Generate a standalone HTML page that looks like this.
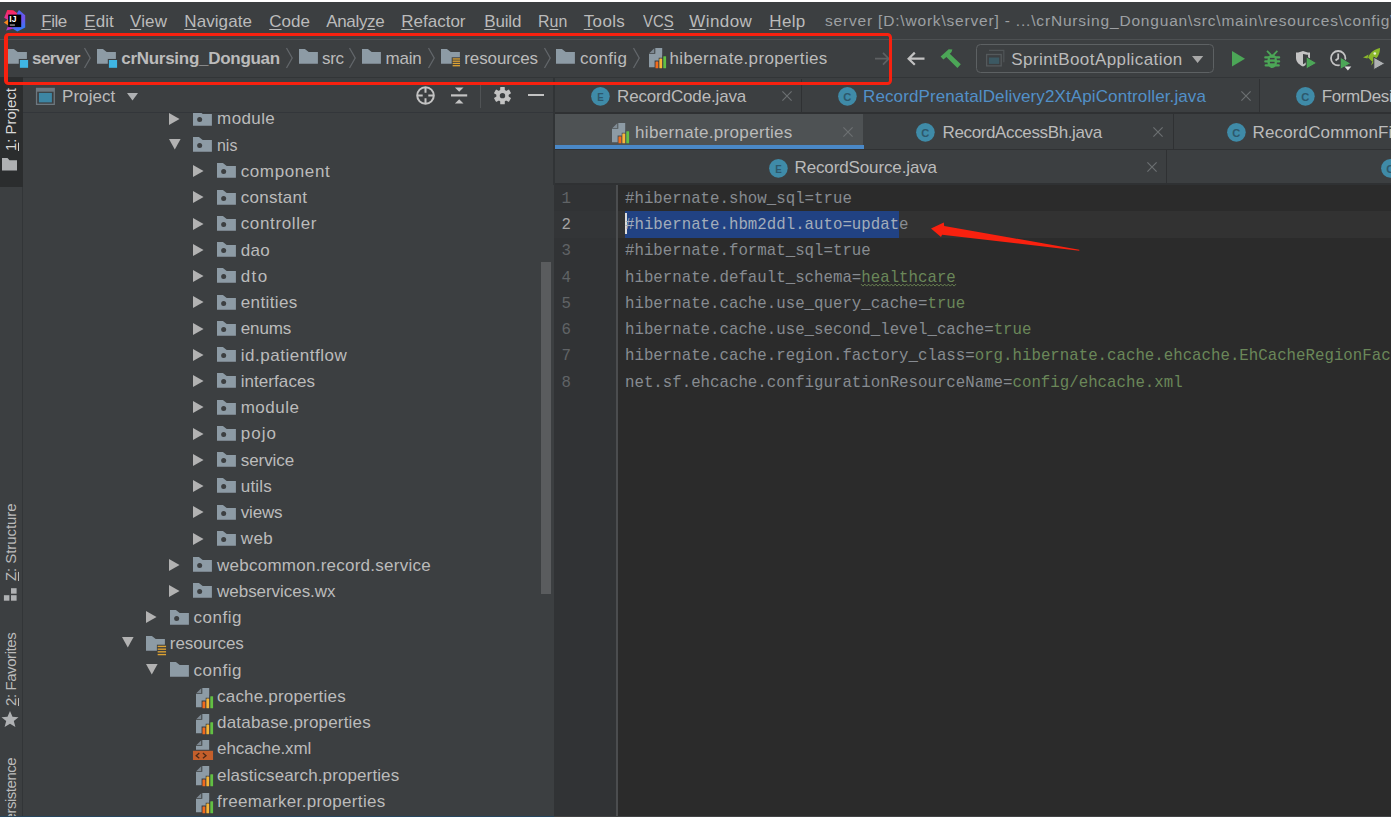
<!DOCTYPE html><html><head><meta charset="utf-8"><title>server - hibernate.properties</title><style>
html,body{margin:0;padding:0;}
body{width:1391px;height:817px;overflow:hidden;background:#3c3f41;position:relative;font-family:"Liberation Sans", sans-serif;color:#bbbbbb;}
.a{position:absolute;white-space:nowrap;}
.t{position:absolute;white-space:nowrap;font-size:17px;line-height:20px;color:#bbbbbb;}
.v{position:absolute;white-space:nowrap;font-size:15px;line-height:20px;color:#bbbbbb;transform-origin:0 0;transform:rotate(-90deg);}
.m{position:absolute;white-space:pre;font-family:"Liberation Mono", monospace;font-size:15.75px;line-height:20px;color:#8a8a8a;}
.ln{position:absolute;font-family:"Liberation Mono", monospace;font-size:15.75px;line-height:20px;color:#606366;}
u{text-decoration-thickness:1.4px;text-underline-offset:1.8px;}
svg{position:absolute;overflow:visible;}
</style></head><body>
<div class="a" style="left:0;top:0;width:1391px;height:2px;background:#fff"></div>
<svg style="left:0;top:0" width="30" height="34" viewBox="0 0 30 34">
<defs><linearGradient id="lgb" x1="0.300" y1="0" x2="0.600" y2="1"><stop offset="0" stop-color="#3a6df5"/><stop offset="0.500" stop-color="#7651ea"/><stop offset="1" stop-color="#2b80fa"/></linearGradient>
<linearGradient id="lgp" x1="0" y1="0" x2="0" y2="1"><stop offset="0" stop-color="#fe2857"/><stop offset="1" stop-color="#d733a6"/></linearGradient></defs>
<path d="M7.300 10.100 L13.200 10.200 L17 13 L17 20 L8 20 L4.200 17.800 Z" fill="url(#lgp)"/>
<path d="M3.900 22.400 L8.300 19.300 L8.300 25.400 Z" fill="#f7871e"/>
<path d="M6.200 30.400 L8.500 25 L13.500 28.400 Z" fill="#b537c8"/>
<path d="M19 10 L25.200 15.300 L25.200 27.600 L17.300 31.500 L11 27.500 L20 26 L17 13 Z" fill="url(#lgb)"/>
<rect x="8.200" y="14.600" width="13" height="12.500" fill="#000"/>
<rect x="9.800" y="24.400" width="5.100" height="1.300" fill="#a0a0a0"/>
<text x="9.300" y="21.600" font-family="Liberation Sans, sans-serif" font-weight="bold" font-size="8.600" fill="#fff">IJ</text>
</svg>
<div class="t" id="mn0" style="left:41.25px;top:12.01px;letter-spacing:-0.473px;"><u>F</u>ile</div>
<div class="t" id="mn1" style="left:84.25px;top:12.01px;letter-spacing:0.054px;"><u>E</u>dit</div>
<div class="t" id="mn2" style="left:130px;top:12.01px;letter-spacing:0.125px;"><u>V</u>iew</div>
<div class="t" id="mn3" style="left:184.25px;top:12.01px;letter-spacing:0.085px;"><u>N</u>avigate</div>
<div class="t" id="mn4" style="left:269.25px;top:12.01px;letter-spacing:0.027px;"><u>C</u>ode</div>
<div class="t" id="mn5" style="left:326.25px;top:12.01px;letter-spacing:-0.346px;">Analy<u>z</u>e</div>
<div class="t" id="mn6" style="left:401.25px;top:12.01px;letter-spacing:-0.002px;"><u>R</u>efactor</div>
<div class="t" id="mn7" style="left:484.25px;top:12.01px;letter-spacing:-0.181px;"><u>B</u>uild</div>
<div class="t" id="mn8" style="left:538px;top:12.01px;transform:scaleX(0.9369);transform-origin:0 50%;">R<u>u</u>n</div>
<div class="t" id="mn9" style="left:583.75px;top:12.01px;letter-spacing:0.347px;"><u>T</u>ools</div>
<div class="t" id="mn10" style="left:643px;top:12.01px;transform:scaleX(0.8794);transform-origin:0 50%;">VC<u>S</u></div>
<div class="t" id="mn11" style="left:689.25px;top:12.01px;letter-spacing:0.415px;"><u>W</u>indow</div>
<div class="t" id="mn12" style="left:769.25px;top:12.01px;letter-spacing:0.366px;"><u>H</u>elp</div>
<div class="t" id="title" style="left:825px;top:10.83px;font-size:15.5px;color:#9da0a3;letter-spacing:0.815px;">server [D:\work\server] - ...\crNursing_Donguan\src\main\resources\config\hibernate.properties</div>
<div class="a" style="left:0;top:38.700px;width:1391px;height:1px;background:#4d5052"></div>
<div class="a" style="left:0;top:77px;width:1391px;height:1px;background:#323537"></div>
<svg style="left:7.5px;top:49.1px" width="21" height="20" viewBox="0 0 21 20"><path d="M0 0 H5.900 L9.700 2.900 H18.900 V14.800 H0 Z" fill="#8d9ba5"/><rect x="10.800" y="9.950" width="10" height="10" fill="#3c3f41"/><rect x="11.900" y="11" width="8.200" height="7.800" fill="#3fb6e4"/></svg>
<div class="t" id="bc0" style="left:32px;top:48.51px;font-weight:bold;letter-spacing:-0.557px;">server</div>
<svg style="left:83.75px;top:48.200px" width="7" height="20" viewBox="0 0 7 20"><path d="M0.500 0 L6.200 10 L0.500 20" fill="none" stroke="#62666a" stroke-width="1.300"/></svg>
<svg style="left:97px;top:49.1px" width="21" height="20" viewBox="0 0 21 20"><path d="M0 0 H5.900 L9.700 2.900 H18.900 V14.800 H0 Z" fill="#8d9ba5"/><rect x="10.800" y="9.950" width="10" height="10" fill="#3c3f41"/><rect x="11.900" y="11" width="8.200" height="7.800" fill="#3fb6e4"/></svg>
<div class="t" id="bc1" style="left:121.25px;top:48.51px;font-weight:bold;letter-spacing:-0.282px;">crNursing_Donguan</div>
<svg style="left:286.25px;top:48.200px" width="7" height="20" viewBox="0 0 7 20"><path d="M0.500 0 L6.200 10 L0.500 20" fill="none" stroke="#62666a" stroke-width="1.300"/></svg>
<svg style="left:298.5px;top:49.1px" width="21" height="20" viewBox="0 0 21 20"><path d="M0 0 H5.900 L9.700 2.900 H18.900 V14.800 H0 Z" fill="#8d9ba5"/></svg>
<div class="t" id="bc2" style="left:322px;top:48.51px;letter-spacing:-0.369px;">src</div>
<svg style="left:349px;top:48.200px" width="7" height="20" viewBox="0 0 7 20"><path d="M0.500 0 L6.200 10 L0.500 20" fill="none" stroke="#62666a" stroke-width="1.300"/></svg>
<svg style="left:361.75px;top:49.1px" width="21" height="20" viewBox="0 0 21 20"><path d="M0 0 H5.900 L9.700 2.900 H18.900 V14.800 H0 Z" fill="#8d9ba5"/></svg>
<div class="t" id="bc3" style="left:385.5px;top:48.51px;letter-spacing:-0.174px;">main</div>
<svg style="left:427.75px;top:48.200px" width="7" height="20" viewBox="0 0 7 20"><path d="M0.500 0 L6.200 10 L0.500 20" fill="none" stroke="#62666a" stroke-width="1.300"/></svg>
<svg style="left:441px;top:49.2px" width="21" height="20" viewBox="0 0 21 20"><path d="M0 0 H5.900 L9.700 2.900 H18.900 V14.800 H0 Z" fill="#8d9ba5"/><rect x="10.700" y="8.300" width="10" height="11" fill="#3c3f41"/><rect x="11.650" y="9.3" width="7.350" height="1.300" fill="#dda233"/><rect x="11.650" y="11.55" width="7.350" height="1.300" fill="#dda233"/><rect x="11.650" y="13.8" width="7.350" height="1.300" fill="#dda233"/><rect x="11.650" y="16.05" width="7.350" height="1.300" fill="#dda233"/></svg>
<div class="t" id="bc4" style="left:464.25px;top:48.51px;letter-spacing:-0.105px;">resources</div>
<svg style="left:543.75px;top:48.200px" width="7" height="20" viewBox="0 0 7 20"><path d="M0.500 0 L6.200 10 L0.500 20" fill="none" stroke="#62666a" stroke-width="1.300"/></svg>
<svg style="left:556px;top:49.1px" width="21" height="20" viewBox="0 0 21 20"><path d="M0 0 H5.900 L9.700 2.900 H18.900 V14.800 H0 Z" fill="#8d9ba5"/></svg>
<div class="t" id="bc5" style="left:580px;top:48.51px;letter-spacing:0.295px;">config</div>
<svg style="left:632.75px;top:48.200px" width="7" height="20" viewBox="0 0 7 20"><path d="M0.500 0 L6.200 10 L0.500 20" fill="none" stroke="#62666a" stroke-width="1.300"/></svg>
<svg style="left:648.5px;top:48.2px" width="18" height="21" viewBox="0 0 18 21"><path d="M6.300 0 H13.200 V19.200 H0 V5.800 H6.300 Z" fill="#8d9ba5"/><path d="M5.300 0.300 L0.500 4.900 H5.300 Z" fill="#8d9ba5" opacity="0.800"/><path d="M5.600 20.500 V12.500 H9.700 V9.700 H13.500 V7.300 H17.500 V20.500 Z" fill="#3c3f41"/><rect x="6.500" y="13.400" width="2.800" height="6.900" rx="0.500" fill="#f26b1d"/><rect x="10.350" y="10.600" width="2.800" height="9.700" rx="0.500" fill="#f7b538"/><rect x="14.300" y="8.200" width="2.800" height="12.100" rx="0.500" fill="#62c043"/></svg>
<div class="t" id="bc6" style="left:669.5px;top:48.51px;letter-spacing:0.348px;">hibernate.properties</div>
<svg style="left:874.500px;top:52px" width="16" height="14" viewBox="0 0 16 14"><path d="M0 6.700 H13.500 M8 0.800 L13.800 6.700 L8 12.600" fill="none" stroke="#5e6163" stroke-width="1.700"/></svg>
<svg style="left:907px;top:52px" width="18" height="14" viewBox="0 0 18 14"><path d="M17.500 6.700 H1.800 M7.800 0.600 L1.600 6.700 L7.800 12.800" fill="none" stroke="#c2c2c2" stroke-width="2.200"/></svg>
<svg style="left:0;top:0" width="1391" height="80" viewBox="0 0 1391 80"><path d="M940.600 56.600 L948.700 49.300 L952.400 49.500 L951.400 52.300 L949.800 53.800 L960.800 64.300 L957.400 67.900 L946.400 57 L943.400 59.500 Z" fill="#4ca657"/></svg>
<div class="a" style="left:975.600px;top:44.200px;width:238px;height:28.800px;border:1.500px solid #5d6163;border-radius:4.500px;box-sizing:border-box;"></div>
<svg style="left:0;top:0" width="1391" height="80" viewBox="0 0 1391 80"><path d="M989 50.300 H1003.800 V62.300" fill="none" stroke="#505557" stroke-width="1.200"/><rect x="986.600" y="54.500" width="14.600" height="11.400" fill="#3c3f41" stroke="#555a5c" stroke-width="1.300"/><rect x="988.900" y="57.500" width="10.300" height="6.400" fill="#3c5963"/></svg>
<div class="t" id="runcfg" style="left:1011.25px;top:50.01px;letter-spacing:0.425px;">SprintBootApplication</div>
<svg style="left:1192px;top:55.500px" width="12" height="8" viewBox="0 0 12 8"><path d="M0 0 H11.250 L5.600 7 Z" fill="#a8a8a8"/></svg>
<svg style="left:1231.600px;top:50.900px" width="14" height="16" viewBox="0 0 14 16"><path d="M0 0 L13 7.750 L0 15.500 Z" fill="#4ca657"/></svg>
<svg style="left:1263.600px;top:49.800px" width="17" height="19" viewBox="0 0 17 19"><g fill="#4ca657">
<ellipse cx="8.200" cy="11.200" rx="4.900" ry="6.900"/>
<rect x="0.200" y="6.300" width="16" height="2.300" rx="1"/><rect x="0.200" y="10.300" width="16" height="2.300" rx="1"/><rect x="0.600" y="14.300" width="15.200" height="2.300" rx="1"/>
<path d="M3.600 0.300 L7.600 4.300 L6.200 5.500 L2.400 1.500 Z"/><path d="M12.800 0.300 L8.800 4.300 L10.200 5.500 L14 1.500 Z"/></g>
<rect x="5.900" y="7.900" width="4.700" height="1.500" fill="#3c3f41"/><rect x="5.900" y="11.800" width="4.700" height="1.500" fill="#3c3f41"/></svg>
<svg style="left:1295.700px;top:51.300px" width="21" height="18" viewBox="0 0 21 18">
<path d="M0 1.500 C3 1.500 5 0.800 7 0 C9 0.800 11 1.500 14 1.500 V7 C14 11.500 10 14 7 15.500 C4 14 0 11.500 0 7 Z" fill="#c4c4c4"/>
<path d="M7 3 C9 3.500 10.500 3.800 12 3.800 V7 C12 10 9.500 12 7 13.200 Z" fill="#3c3f41"/>
<path d="M10.200 5.700 L20.800 12 L10.200 18 Z" fill="#4ca657" stroke="#3c3f41" stroke-width="1"/></svg>
<svg style="left:1330.400px;top:49.900px" width="22" height="21" viewBox="0 0 22 21">
<circle cx="8.200" cy="8.200" r="7.200" fill="none" stroke="#c4c4c4" stroke-width="1.800"/>
<path d="M8.200 3.500 V8.500 L5.500 10.500" fill="none" stroke="#c4c4c4" stroke-width="1.800"/>
<path d="M10.200 7.100 L20.800 13.400 L10.200 19.400 Z" fill="#4ca657" stroke="#3c3f41" stroke-width="1"/>
<path d="M14.500 16.500 H21.300 L17.900 20.600 Z" fill="#e0e0e0"/></svg>
<svg style="left:1363.400px;top:47.800px" width="22" height="22" viewBox="0 0 22 22">
<path d="M17 0 C12 1 7.500 4 5 9.500 L9 13.500 C14 11 17 6.500 17 0 Z" fill="#8ab82a"/>
<path d="M5.500 6.500 L0 9.500 L4.500 10.500 Z M9.500 13 L8 17.500 L12.500 12.500 Z" fill="#8ab82a"/>
<circle cx="11.800" cy="5.500" r="1.300" fill="#e8f0d0"/>
<path d="M10.800 9.200 L21.800 15.500 L10.800 21.700 Z" fill="#afb1b3" stroke="#3c3f41" stroke-width="1"/></svg>
<div class="a" style="left:22px;top:78px;width:1px;height:739px;background:#323537"></div>
<div class="a" style="left:0;top:77.400px;width:22.500px;height:109.400px;background:#2b2d2e"></div>
<div class="v" id="v1" style="left:0.5px;top:151.1px;color:#d8d8d8;letter-spacing:-0.053px;"><u>1</u>: Project</div>
<svg style="left:2.200px;top:157.700px" width="15" height="13" viewBox="0 0 15 13"><path d="M0 0 H5.500 L7.500 2.200 H15 V12.500 H0 Z" fill="#afb1b3"/></svg>
<div class="v" id="v2" style="left:0.5px;top:580.6px;color:#bbbbbb;letter-spacing:-0.07px;"><u>Z</u>: Structure</div>
<svg style="left:0;top:580px" width="24" height="24" viewBox="0 580 24 24"><rect x="11" y="588.200" width="5.600" height="5.500" fill="#afb1b3"/><rect x="3.900" y="595.200" width="5.500" height="5.500" fill="#afb1b3"/><rect x="11" y="595.200" width="5.600" height="5.500" fill="#afb1b3"/></svg>
<div class="v" id="v3" style="left:0.5px;top:706px;color:#bbbbbb;letter-spacing:-0.417px;"><u>2</u>: Favorites</div>
<svg style="left:1.300px;top:710.700px" width="18" height="16" viewBox="0 0 17 16"><path d="M8.500 0 L11 5.800 L17 6.200 L12.300 10.100 L13.900 16 L8.500 12.700 L3.100 16 L4.700 10.100 L0 6.200 L6 5.800 Z" fill="#afb1b3"/></svg>
<div class="v" id="v4" style="left:0.5px;top:831px;color:#bbbbbb;letter-spacing:-0.476px;">Persistence</div>
<div class="a" style="left:23px;top:112px;width:530px;height:1px;background:#33363a"></div>
<svg style="left:0;top:0" width="60" height="110" viewBox="0 0 60 110"><rect x="35.900" y="87.800" width="19" height="17.200" fill="#6d7880"/><rect x="37.200" y="91.700" width="16.400" height="12" fill="#3c3f41"/><rect x="38.900" y="92.900" width="13" height="9.500" fill="#3d86a4"/></svg>
<div class="t" id="proj" style="left:62px;top:86.81px;letter-spacing:0.058px;">Project</div>
<svg style="left:127px;top:93.200px" width="12" height="8" viewBox="0 0 12 8"><path d="M0 0 H11 L5.500 7.500 Z" fill="#afb1b3"/></svg>
<svg style="left:415.500px;top:86px" width="20" height="20" viewBox="0 0 20 20"><circle cx="9.500" cy="9.500" r="8.300" fill="none" stroke="#c3c3c3" stroke-width="2"/><path d="M9.500 1 V6.700 M9.500 12.300 V18 M1 9.500 H6.700 M12.300 9.500 H18" stroke="#c3c3c3" stroke-width="2"/></svg>
<svg style="left:450.600px;top:87px" width="17" height="17" viewBox="0 0 17 17"><path d="M0 8.400 H16.200" stroke="#c3c3c3" stroke-width="2.200"/><path d="M3.900 0.500 H12.500 L8.200 4.700 Z M3.900 16.600 H12.500 L8.200 12.200 Z" fill="#c3c3c3"/></svg>
<div class="a" style="left:480px;top:85px;width:1px;height:23px;background:#505355"></div>
<svg style="left:494.400px;top:86.900px" width="17" height="18" viewBox="0 0 17 18"><g fill="#c3c3c3">
<circle cx="8.500" cy="8.650" r="6.200"/>
<rect x="6.200" y="0" width="4.600" height="17.300" rx="0.600"/>
<rect x="6.200" y="0" width="4.600" height="17.300" rx="0.600" transform="rotate(60 8.500 8.650)"/>
<rect x="6.200" y="0" width="4.600" height="17.300" rx="0.600" transform="rotate(120 8.500 8.650)"/></g>
<circle cx="8.500" cy="8.650" r="2.700" fill="#3c3f41"/></svg>
<div class="a" style="left:528.300px;top:94.300px;width:16.200px;height:2.200px;background:#c3c3c3"></div>
<div class="a" style="left:23px;top:113.300px;width:530px;height:703.700px;overflow:hidden">
<svg style="left:146.25px;top:-0.7px" width="11" height="13" viewBox="0 0 11 13"><path d="M0 0 L10.550 6.050 L0 12.100 Z" fill="#b2b2b2"/></svg>
<svg style="left:170.4px;top:-2.5px" width="21" height="20" viewBox="0 0 21 20"><path d="M0 0 H5.900 L9.700 2.900 H18.900 V14.800 H0 Z" fill="#8d9ba5"/><circle cx="6.650" cy="8.600" r="2.500" fill="#3c3f41"/></svg>
<div class="t" id="tr0" style="left:194.1px;top:-4.04px;letter-spacing:0.388px;">module</div>
<svg style="left:146.45px;top:25.3px" width="12" height="11" viewBox="0 0 12 11"><path d="M0 0 H11.600 L5.800 10.500 Z" fill="#b2b2b2"/></svg>
<svg style="left:170.4px;top:23.75px" width="21" height="20" viewBox="0 0 21 20"><path d="M0 0 H5.900 L9.700 2.900 H18.900 V14.800 H0 Z" fill="#8d9ba5"/><circle cx="6.650" cy="8.600" r="2.500" fill="#3c3f41"/></svg>
<div class="t" id="tr1" style="left:194.1px;top:22.21px;transform:scaleX(0.9386);transform-origin:0 50%;">nis</div>
<svg style="left:170.45px;top:51.8px" width="11" height="13" viewBox="0 0 11 13"><path d="M0 0 L10.550 6.050 L0 12.100 Z" fill="#b2b2b2"/></svg>
<svg style="left:194.0px;top:50.0px" width="21" height="20" viewBox="0 0 21 20"><path d="M0 0 H5.900 L9.700 2.900 H18.900 V14.800 H0 Z" fill="#8d9ba5"/><circle cx="6.650" cy="8.600" r="2.500" fill="#3c3f41"/></svg>
<div class="t" id="tr2" style="left:217.7px;top:48.46px;letter-spacing:0.609px;">component</div>
<svg style="left:170.45px;top:78.05px" width="11" height="13" viewBox="0 0 11 13"><path d="M0 0 L10.550 6.050 L0 12.100 Z" fill="#b2b2b2"/></svg>
<svg style="left:194.0px;top:76.25px" width="21" height="20" viewBox="0 0 21 20"><path d="M0 0 H5.900 L9.700 2.900 H18.900 V14.800 H0 Z" fill="#8d9ba5"/><circle cx="6.650" cy="8.600" r="2.500" fill="#3c3f41"/></svg>
<div class="t" id="tr3" style="left:217.7px;top:74.71px;letter-spacing:0.271px;">constant</div>
<svg style="left:170.45px;top:104.3px" width="11" height="13" viewBox="0 0 11 13"><path d="M0 0 L10.550 6.050 L0 12.100 Z" fill="#b2b2b2"/></svg>
<svg style="left:194.0px;top:102.5px" width="21" height="20" viewBox="0 0 21 20"><path d="M0 0 H5.900 L9.700 2.900 H18.900 V14.800 H0 Z" fill="#8d9ba5"/><circle cx="6.650" cy="8.600" r="2.500" fill="#3c3f41"/></svg>
<div class="t" id="tr4" style="left:217.7px;top:100.96px;letter-spacing:0.645px;">controller</div>
<svg style="left:170.45px;top:130.55px" width="11" height="13" viewBox="0 0 11 13"><path d="M0 0 L10.550 6.050 L0 12.100 Z" fill="#b2b2b2"/></svg>
<svg style="left:194.0px;top:128.75px" width="21" height="20" viewBox="0 0 21 20"><path d="M0 0 H5.900 L9.700 2.900 H18.900 V14.800 H0 Z" fill="#8d9ba5"/><circle cx="6.650" cy="8.600" r="2.500" fill="#3c3f41"/></svg>
<div class="t" id="tr5" style="left:217.7px;top:127.21px;letter-spacing:0.37px;">dao</div>
<svg style="left:170.45px;top:156.8px" width="11" height="13" viewBox="0 0 11 13"><path d="M0 0 L10.550 6.050 L0 12.100 Z" fill="#b2b2b2"/></svg>
<svg style="left:194.0px;top:155.0px" width="21" height="20" viewBox="0 0 21 20"><path d="M0 0 H5.900 L9.700 2.900 H18.900 V14.800 H0 Z" fill="#8d9ba5"/><circle cx="6.650" cy="8.600" r="2.500" fill="#3c3f41"/></svg>
<div class="t" id="tr6" style="left:217.7px;top:153.46px;letter-spacing:1.464px;">dto</div>
<svg style="left:170.45px;top:183.05px" width="11" height="13" viewBox="0 0 11 13"><path d="M0 0 L10.550 6.050 L0 12.100 Z" fill="#b2b2b2"/></svg>
<svg style="left:194.0px;top:181.25px" width="21" height="20" viewBox="0 0 21 20"><path d="M0 0 H5.900 L9.700 2.900 H18.900 V14.800 H0 Z" fill="#8d9ba5"/><circle cx="6.650" cy="8.600" r="2.500" fill="#3c3f41"/></svg>
<div class="t" id="tr7" style="left:217.7px;top:179.71px;letter-spacing:0.39px;">entities</div>
<svg style="left:170.45px;top:209.3px" width="11" height="13" viewBox="0 0 11 13"><path d="M0 0 L10.550 6.050 L0 12.100 Z" fill="#b2b2b2"/></svg>
<svg style="left:194.0px;top:207.5px" width="21" height="20" viewBox="0 0 21 20"><path d="M0 0 H5.900 L9.700 2.900 H18.900 V14.800 H0 Z" fill="#8d9ba5"/><circle cx="6.650" cy="8.600" r="2.500" fill="#3c3f41"/></svg>
<div class="t" id="tr8" style="left:217.7px;top:205.96px;letter-spacing:-0.107px;">enums</div>
<svg style="left:170.45px;top:235.55px" width="11" height="13" viewBox="0 0 11 13"><path d="M0 0 L10.550 6.050 L0 12.100 Z" fill="#b2b2b2"/></svg>
<svg style="left:194.0px;top:233.75px" width="21" height="20" viewBox="0 0 21 20"><path d="M0 0 H5.900 L9.700 2.900 H18.900 V14.800 H0 Z" fill="#8d9ba5"/><circle cx="6.650" cy="8.600" r="2.500" fill="#3c3f41"/></svg>
<div class="t" id="tr9" style="left:217.7px;top:232.21px;letter-spacing:0.523px;">id.patientflow</div>
<svg style="left:170.45px;top:261.8px" width="11" height="13" viewBox="0 0 11 13"><path d="M0 0 L10.550 6.050 L0 12.100 Z" fill="#b2b2b2"/></svg>
<svg style="left:194.0px;top:260.0px" width="21" height="20" viewBox="0 0 21 20"><path d="M0 0 H5.900 L9.700 2.900 H18.900 V14.800 H0 Z" fill="#8d9ba5"/><circle cx="6.650" cy="8.600" r="2.500" fill="#3c3f41"/></svg>
<div class="t" id="tr10" style="left:217.7px;top:258.46px;letter-spacing:0.063px;">interfaces</div>
<svg style="left:170.45px;top:288.05px" width="11" height="13" viewBox="0 0 11 13"><path d="M0 0 L10.550 6.050 L0 12.100 Z" fill="#b2b2b2"/></svg>
<svg style="left:194.0px;top:286.25px" width="21" height="20" viewBox="0 0 21 20"><path d="M0 0 H5.900 L9.700 2.900 H18.900 V14.800 H0 Z" fill="#8d9ba5"/><circle cx="6.650" cy="8.600" r="2.500" fill="#3c3f41"/></svg>
<div class="t" id="tr11" style="left:217.7px;top:284.71px;letter-spacing:0.506px;">module</div>
<svg style="left:170.45px;top:314.3px" width="11" height="13" viewBox="0 0 11 13"><path d="M0 0 L10.550 6.050 L0 12.100 Z" fill="#b2b2b2"/></svg>
<svg style="left:194.0px;top:312.5px" width="21" height="20" viewBox="0 0 21 20"><path d="M0 0 H5.900 L9.700 2.900 H18.900 V14.800 H0 Z" fill="#8d9ba5"/><circle cx="6.650" cy="8.600" r="2.500" fill="#3c3f41"/></svg>
<div class="t" id="tr12" style="left:217.7px;top:310.96px;letter-spacing:1.046px;">pojo</div>
<svg style="left:170.45px;top:340.55px" width="11" height="13" viewBox="0 0 11 13"><path d="M0 0 L10.550 6.050 L0 12.100 Z" fill="#b2b2b2"/></svg>
<svg style="left:194.0px;top:338.75px" width="21" height="20" viewBox="0 0 21 20"><path d="M0 0 H5.900 L9.700 2.900 H18.900 V14.800 H0 Z" fill="#8d9ba5"/><circle cx="6.650" cy="8.600" r="2.500" fill="#3c3f41"/></svg>
<div class="t" id="tr13" style="left:217.7px;top:337.21px;letter-spacing:-0.048px;">service</div>
<svg style="left:170.45px;top:366.8px" width="11" height="13" viewBox="0 0 11 13"><path d="M0 0 L10.550 6.050 L0 12.100 Z" fill="#b2b2b2"/></svg>
<svg style="left:194.0px;top:365.0px" width="21" height="20" viewBox="0 0 21 20"><path d="M0 0 H5.900 L9.700 2.900 H18.900 V14.800 H0 Z" fill="#8d9ba5"/><circle cx="6.650" cy="8.600" r="2.500" fill="#3c3f41"/></svg>
<div class="t" id="tr14" style="left:217.7px;top:363.46px;letter-spacing:0.237px;">utils</div>
<svg style="left:170.45px;top:393.05px" width="11" height="13" viewBox="0 0 11 13"><path d="M0 0 L10.550 6.050 L0 12.100 Z" fill="#b2b2b2"/></svg>
<svg style="left:194.0px;top:391.25px" width="21" height="20" viewBox="0 0 21 20"><path d="M0 0 H5.900 L9.700 2.900 H18.900 V14.800 H0 Z" fill="#8d9ba5"/><circle cx="6.650" cy="8.600" r="2.500" fill="#3c3f41"/></svg>
<div class="t" id="tr15" style="left:217.7px;top:389.71px;letter-spacing:-0.159px;">views</div>
<svg style="left:170.45px;top:419.3px" width="11" height="13" viewBox="0 0 11 13"><path d="M0 0 L10.550 6.050 L0 12.100 Z" fill="#b2b2b2"/></svg>
<svg style="left:194.0px;top:417.5px" width="21" height="20" viewBox="0 0 21 20"><path d="M0 0 H5.900 L9.700 2.900 H18.900 V14.800 H0 Z" fill="#8d9ba5"/><circle cx="6.650" cy="8.600" r="2.500" fill="#3c3f41"/></svg>
<div class="t" id="tr16" style="left:217.7px;top:415.96px;letter-spacing:0.445px;">web</div>
<svg style="left:146.25px;top:445.55px" width="11" height="13" viewBox="0 0 11 13"><path d="M0 0 L10.550 6.050 L0 12.100 Z" fill="#b2b2b2"/></svg>
<svg style="left:170.4px;top:443.75px" width="21" height="20" viewBox="0 0 21 20"><path d="M0 0 H5.900 L9.700 2.900 H18.900 V14.800 H0 Z" fill="#8d9ba5"/><circle cx="6.650" cy="8.600" r="2.500" fill="#3c3f41"/></svg>
<div class="t" id="tr17" style="left:194.1px;top:442.21px;letter-spacing:0.246px;">webcommon.record.service</div>
<svg style="left:146.25px;top:471.8px" width="11" height="13" viewBox="0 0 11 13"><path d="M0 0 L10.550 6.050 L0 12.100 Z" fill="#b2b2b2"/></svg>
<svg style="left:170.4px;top:470.0px" width="21" height="20" viewBox="0 0 21 20"><path d="M0 0 H5.900 L9.700 2.900 H18.900 V14.800 H0 Z" fill="#8d9ba5"/><circle cx="6.650" cy="8.600" r="2.500" fill="#3c3f41"/></svg>
<div class="t" id="tr18" style="left:194.1px;top:468.46px;letter-spacing:-0.048px;">webservices.wx</div>
<svg style="left:123.25px;top:498.05px" width="11" height="13" viewBox="0 0 11 13"><path d="M0 0 L10.550 6.050 L0 12.100 Z" fill="#b2b2b2"/></svg>
<svg style="left:146.8px;top:496.25px" width="21" height="20" viewBox="0 0 21 20"><path d="M0 0 H5.900 L9.700 2.900 H18.900 V14.800 H0 Z" fill="#8d9ba5"/><circle cx="6.650" cy="8.600" r="2.500" fill="#3c3f41"/></svg>
<div class="t" id="tr19" style="left:170.5px;top:494.71px;letter-spacing:0.523px;">config</div>
<svg style="left:99.15px;top:524.05px" width="12" height="11" viewBox="0 0 12 11"><path d="M0 0 H11.600 L5.800 10.500 Z" fill="#b2b2b2"/></svg>
<svg style="left:123.1px;top:522.5px" width="21" height="20" viewBox="0 0 21 20"><path d="M0 0 H5.900 L9.700 2.900 H18.900 V14.800 H0 Z" fill="#8d9ba5"/><rect x="10.900" y="8.700" width="10" height="11" fill="#3c3f41"/><rect x="11.650" y="9.75" width="8.400" height="1.350" fill="#dda233"/><rect x="11.650" y="12.5" width="8.400" height="1.350" fill="#dda233"/><rect x="11.650" y="15.15" width="8.400" height="1.350" fill="#dda233"/><rect x="11.650" y="17.9" width="8.400" height="1.350" fill="#dda233"/></svg>
<div class="t" id="tr20" style="left:146.8px;top:520.96px;letter-spacing:-0.081px;">resources</div>
<svg style="left:122.85px;top:550.3px" width="12" height="11" viewBox="0 0 12 11"><path d="M0 0 H11.600 L5.800 10.500 Z" fill="#b2b2b2"/></svg>
<svg style="left:146.8px;top:548.75px" width="21" height="20" viewBox="0 0 21 20"><path d="M0 0 H5.900 L9.700 2.900 H18.900 V14.800 H0 Z" fill="#8d9ba5"/></svg>
<div class="t" id="tr21" style="left:170.5px;top:547.21px;letter-spacing:0.523px;">config</div>
<svg style="left:173.1px;top:574.25px" width="18" height="21" viewBox="0 0 18 21"><path d="M6.300 0 H13.200 V19.200 H0 V5.800 H6.300 Z" fill="#8d9ba5"/><path d="M5.300 0.300 L0.500 4.900 H5.300 Z" fill="#8d9ba5" opacity="0.800"/><path d="M5.600 20.500 V12.500 H9.700 V9.700 H13.500 V7.300 H17.500 V20.500 Z" fill="#3c3f41"/><rect x="6.500" y="13.400" width="2.800" height="6.900" rx="0.500" fill="#f26b1d"/><rect x="10.350" y="10.600" width="2.800" height="9.700" rx="0.500" fill="#f7b538"/><rect x="14.300" y="8.200" width="2.800" height="12.100" rx="0.500" fill="#62c043"/></svg>
<div class="t" id="tr22" style="left:194.1px;top:573.46px;letter-spacing:0.191px;">cache.properties</div>
<svg style="left:173.1px;top:600.5px" width="18" height="21" viewBox="0 0 18 21"><path d="M6.300 0 H13.200 V19.200 H0 V5.800 H6.300 Z" fill="#8d9ba5"/><path d="M5.300 0.300 L0.500 4.900 H5.300 Z" fill="#8d9ba5" opacity="0.800"/><path d="M5.600 20.500 V12.500 H9.700 V9.700 H13.500 V7.300 H17.500 V20.500 Z" fill="#3c3f41"/><rect x="6.500" y="13.400" width="2.800" height="6.900" rx="0.500" fill="#f26b1d"/><rect x="10.350" y="10.600" width="2.800" height="9.700" rx="0.500" fill="#f7b538"/><rect x="14.300" y="8.200" width="2.800" height="12.100" rx="0.500" fill="#62c043"/></svg>
<div class="t" id="tr23" style="left:194.1px;top:599.71px;letter-spacing:0.182px;">database.properties</div>
<svg style="left:173.1px;top:626.75px" width="18" height="21" viewBox="0 0 18 21"><path d="M6.300 0 H13.150 V9.700 H0 V5.800 H6.300 Z" fill="#8d9ba5"/><path d="M5.300 0.300 L0.500 4.900 H5.300 Z" fill="#8d9ba5" opacity="0.800"/><rect x="-3.050" y="10.800" width="20.100" height="9.200" fill="#c45f2b"/><path d="M3.300 13.100 L0.200 15.700 L3.300 18.300 M6.900 13.100 L10 15.700 L6.900 18.300" stroke="#4a2a18" stroke-width="1.300" fill="none"/></svg>
<div class="t" id="tr24" style="left:194.1px;top:625.96px;letter-spacing:-0.123px;">ehcache.xml</div>
<svg style="left:173.1px;top:653.0px" width="18" height="21" viewBox="0 0 18 21"><path d="M6.300 0 H13.200 V19.200 H0 V5.800 H6.300 Z" fill="#8d9ba5"/><path d="M5.300 0.300 L0.500 4.900 H5.300 Z" fill="#8d9ba5" opacity="0.800"/><path d="M5.600 20.500 V12.500 H9.700 V9.700 H13.500 V7.300 H17.500 V20.500 Z" fill="#3c3f41"/><rect x="6.500" y="13.400" width="2.800" height="6.900" rx="0.500" fill="#f26b1d"/><rect x="10.350" y="10.600" width="2.800" height="9.700" rx="0.500" fill="#f7b538"/><rect x="14.300" y="8.200" width="2.800" height="12.100" rx="0.500" fill="#62c043"/></svg>
<div class="t" id="tr25" style="left:194.1px;top:652.21px;letter-spacing:0.111px;">elasticsearch.properties</div>
<svg style="left:173.1px;top:679.25px" width="18" height="21" viewBox="0 0 18 21"><path d="M6.300 0 H13.200 V19.200 H0 V5.800 H6.300 Z" fill="#8d9ba5"/><path d="M5.300 0.300 L0.500 4.900 H5.300 Z" fill="#8d9ba5" opacity="0.800"/><path d="M5.600 20.500 V12.500 H9.700 V9.700 H13.500 V7.300 H17.500 V20.500 Z" fill="#3c3f41"/><rect x="6.500" y="13.400" width="2.800" height="6.900" rx="0.500" fill="#f26b1d"/><rect x="10.350" y="10.600" width="2.800" height="9.700" rx="0.500" fill="#f7b538"/><rect x="14.300" y="8.200" width="2.800" height="12.100" rx="0.500" fill="#62c043"/></svg>
<div class="t" id="tr26" style="left:194.1px;top:678.46px;letter-spacing:0.333px;">freemarker.properties</div>
</div>
<div class="a" style="left:541px;top:261.800px;width:10px;height:332.200px;background:#5a5c5e"></div>
<div class="a" style="left:0;top:815.600px;width:553.500px;height:1.400px;background:#27465e"></div>
<div class="a" style="left:553.5px;top:78px;width:837.5px;height:107px;background:#3c3f41"></div>
<div class="a" style="left:553.5px;top:112.250px;width:837.5px;height:1.750px;background:#2f3133"></div>
<div class="a" style="left:553.5px;top:148.750px;width:837.5px;height:1.250px;background:#2f3133"></div>
<div class="a" style="left:553.5px;top:182.500px;width:837.5px;height:2px;background:#2f3133"></div>
<div class="a" style="left:553.100px;top:78px;width:1.600px;height:107px;background:#313436"></div>
<div class="a" style="left:554.700px;top:114px;width:308.800px;height:31px;background:#4e5254"></div>
<div class="a" style="left:554.700px;top:144.750px;width:309px;height:4.500px;background:#4a88c7"></div>
<svg style="left:591.25px;top:87.25px" width="19" height="19" viewBox="0 0 19 19"><circle cx="9.400" cy="9.350" r="9.300" fill="#3f8ba8"/><text transform="translate(9.400 13.550) scale(0.860 1)" x="0" y="0" text-anchor="middle" font-family="Liberation Sans, sans-serif" font-weight="bold" font-size="11.400" fill="#2d586c">E</text></svg>
<div class="t" id="tb0" style="left:617px;top:87.01px;letter-spacing:-0.145px;">RecordCode.java</div>
<svg style="left:782px;top:91.25px" width="10" height="10" viewBox="0 0 10 10"><path d="M0.400 0.400 L9.600 9.600 M9.600 0.400 L0.400 9.600" stroke="#6c7072" stroke-width="1.150"/></svg>
<div class="a" style="left:800.5px;top:79px;width:1.250px;height:33.5px;background:#2f3133"></div>
<svg style="left:837.5px;top:87.25px" width="19" height="19" viewBox="0 0 19 19"><circle cx="9.400" cy="9.350" r="9.300" fill="#3f8ba8"/><text x="9.300" y="13.500" text-anchor="middle" font-family="Liberation Sans, sans-serif" font-weight="bold" font-size="11.200" fill="#2d586c">C</text></svg>
<div class="t" id="tb1" style="left:863px;top:87.01px;color:#5290c8;letter-spacing:0.111px;">RecordPrenatalDelivery2XtApiController.java</div>
<svg style="left:1240.5px;top:91.25px" width="10" height="10" viewBox="0 0 10 10"><path d="M0.400 0.400 L9.600 9.600 M9.600 0.400 L0.400 9.600" stroke="#6c7072" stroke-width="1.150"/></svg>
<div class="a" style="left:1259px;top:79px;width:1.250px;height:33.5px;background:#2f3133"></div>
<svg style="left:1296px;top:87.25px" width="19" height="19" viewBox="0 0 19 19"><circle cx="9.400" cy="9.350" r="9.300" fill="#3f8ba8"/><text x="9.300" y="13.500" text-anchor="middle" font-family="Liberation Sans, sans-serif" font-weight="bold" font-size="11.200" fill="#2d586c">C</text></svg>
<div class="t" id="tb2" style="left:1321.75px;top:87.01px;letter-spacing:-0.389px;">FormDesignApi.java</div>
<svg style="left:611.75px;top:123px" width="18" height="21" viewBox="0 0 18 21"><path d="M6.300 0 H13.200 V19.200 H0 V5.800 H6.300 Z" fill="#8d9ba5"/><path d="M5.300 0.300 L0.500 4.900 H5.300 Z" fill="#8d9ba5" opacity="0.800"/><path d="M5.600 20.500 V12.500 H9.700 V9.700 H13.500 V7.300 H17.500 V20.500 Z" fill="#4e5254"/><rect x="6.500" y="13.400" width="2.800" height="6.900" rx="0.500" fill="#f26b1d"/><rect x="10.350" y="10.600" width="2.800" height="9.700" rx="0.500" fill="#f7b538"/><rect x="14.300" y="8.200" width="2.800" height="12.100" rx="0.500" fill="#62c043"/></svg>
<div class="t" id="tb3" style="left:635px;top:122.51px;letter-spacing:0.322px;">hibernate.properties</div>
<svg style="left:842.75px;top:126.5px" width="10" height="10" viewBox="0 0 10 10"><path d="M0.400 0.400 L9.600 9.600 M9.600 0.400 L0.400 9.600" stroke="#6c7072" stroke-width="1.150"/></svg>
<svg style="left:916.25px;top:122.75px" width="19" height="19" viewBox="0 0 19 19"><circle cx="9.400" cy="9.350" r="9.300" fill="#3f8ba8"/><text x="9.300" y="13.500" text-anchor="middle" font-family="Liberation Sans, sans-serif" font-weight="bold" font-size="11.200" fill="#2d586c">C</text></svg>
<div class="t" id="tb4" style="left:942.5px;top:122.51px;letter-spacing:-0.368px;">RecordAccessBh.java</div>
<svg style="left:1153px;top:126.5px" width="10" height="10" viewBox="0 0 10 10"><path d="M0.400 0.400 L9.600 9.600 M9.600 0.400 L0.400 9.600" stroke="#6c7072" stroke-width="1.150"/></svg>
<div class="a" style="left:1172.5px;top:114px;width:1.250px;height:35px;background:#2f3133"></div>
<svg style="left:1226.5px;top:122.75px" width="19" height="19" viewBox="0 0 19 19"><circle cx="9.400" cy="9.350" r="9.300" fill="#3f8ba8"/><text x="9.300" y="13.500" text-anchor="middle" font-family="Liberation Sans, sans-serif" font-weight="bold" font-size="11.200" fill="#2d586c">C</text></svg>
<div class="t" id="tb5" style="left:1252.5px;top:122.51px;letter-spacing:0.147px;">RecordCommonFile.java</div>
<svg style="left:769px;top:158.5px" width="19" height="19" viewBox="0 0 19 19"><circle cx="9.400" cy="9.350" r="9.300" fill="#3f8ba8"/><text transform="translate(9.400 13.550) scale(0.860 1)" x="0" y="0" text-anchor="middle" font-family="Liberation Sans, sans-serif" font-weight="bold" font-size="11.400" fill="#2d586c">E</text></svg>
<div class="t" id="tb6" style="left:794.5px;top:158.01px;letter-spacing:-0.126px;">RecordSource.java</div>
<svg style="left:1146.75px;top:162px" width="10" height="10" viewBox="0 0 10 10"><path d="M0.400 0.400 L9.600 9.600 M9.600 0.400 L0.400 9.600" stroke="#6c7072" stroke-width="1.150"/></svg>
<div class="a" style="left:1166px;top:150px;width:1.250px;height:33px;background:#2f3133"></div>
<svg style="left:1380.5px;top:158.5px" width="19" height="19" viewBox="0 0 19 19"><circle cx="9.400" cy="9.350" r="9.300" fill="#3f8ba8"/><text x="9.300" y="13.500" text-anchor="middle" font-family="Liberation Sans, sans-serif" font-weight="bold" font-size="11.200" fill="#2d586c">C</text></svg>
<div class="a" style="left:553.5px;top:184.5px;width:837.5px;height:632.5px;background:#2b2b2b"></div>
<div class="a" style="left:553.5px;top:184.5px;width:63.0px;height:632.5px;background:#313335"></div>
<div class="a" style="left:553.5px;top:211.250px;width:837.5px;height:26.250px;background:#323232"></div>
<div class="a" style="left:553.5px;top:211.250px;width:62.5px;height:26.250px;background:#333537"></div>
<div class="a" style="left:616px;top:184.5px;width:1.700px;height:632.5px;background:#4b4d4f"></div>
<div class="a" style="left:624.750px;top:211.250px;width:274.500px;height:26.250px;background:#214283"></div>
<div class="a" style="left:624.800px;top:213.300px;width:2.300px;height:21px;background:#dcdcdc"></div>
<div class="ln" style="left:561.500px;top:188.8px;color:#606366">1</div>
<div class="m" id="ln0" style="left:625px;top:188.8px;"><span style="color:#878b91">#hibernate.show_sql=true</span></div>
<div class="ln" style="left:561.500px;top:215.05px;color:#a4a3a3">2</div>
<div class="m" id="ln1" style="left:625px;top:215.05px;"><span style="color:#a3adba">#hibernate.hbm2ddl.auto=updat</span><span style="color:#878b91">e</span></div>
<div class="ln" style="left:561.500px;top:241.3px;color:#606366">3</div>
<div class="m" id="ln2" style="left:625px;top:241.3px;"><span style="color:#878b91">#hibernate.format_sql=true</span></div>
<div class="ln" style="left:561.500px;top:267.55px;color:#606366">4</div>
<div class="m" id="ln3" style="left:625px;top:267.55px;"><span style="color:#878b91">hibernate.default_schema=</span><span style="color:#6a8759">healthcare</span></div>
<div class="ln" style="left:561.500px;top:293.8px;color:#606366">5</div>
<div class="m" id="ln4" style="left:625px;top:293.8px;"><span style="color:#878b91">hibernate.cache.use_query_cache=</span><span style="color:#6a8759">true</span></div>
<div class="ln" style="left:561.500px;top:320.05px;color:#606366">6</div>
<div class="m" id="ln5" style="left:625px;top:320.05px;"><span style="color:#878b91">hibernate.cache.use_second_level_cache=</span><span style="color:#6a8759">true</span></div>
<div class="ln" style="left:561.500px;top:346.3px;color:#606366">7</div>
<div class="m" id="ln6" style="left:625px;top:346.3px;"><span style="color:#878b91">hibernate.cache.region.factory_class=</span><span style="color:#6a8759">org.hibernate.cache.ehcache.EhCacheRegionFactory</span></div>
<div class="ln" style="left:561.500px;top:372.55px;color:#606366">8</div>
<div class="m" id="ln7" style="left:625px;top:372.55px;"><span style="color:#878b91">net.sf.ehcache.configurationResourceName=</span><span style="color:#6a8759">config/ehcache.xml</span></div>
<svg style="left:0;top:0" width="1391" height="817" viewBox="0 0 1391 817"><path d="M861.0 284.1 L862.9 286.1 L864.8 284.1 L866.7 286.1 L868.6 284.1 L870.5 286.1 L872.4 284.1 L874.3 286.1 L876.2 284.1 L878.1 286.1 L880.0 284.1 L881.9 286.1 L883.8 284.1 L885.7 286.1 L887.6 284.1 L889.5 286.1 L891.4 284.1 L893.3 286.1 L895.2 284.1 L897.1 286.1 L899.0 284.1 L900.9 286.1 L902.8 284.1 L904.7 286.1 L906.6 284.1 L908.5 286.1 L910.4 284.1 L912.3 286.1 L914.2 284.1 L916.1 286.1 L918.0 284.1 L919.9 286.1 L921.8 284.1 L923.7 286.1 L925.6 284.1 L927.5 286.1 L929.4 284.1 L931.3 286.1 L933.2 284.1 L935.1 286.1 L937.0 284.1 L938.9 286.1 L940.8 284.1 L942.7 286.1 L944.6 284.1 L946.5 286.1 L948.4 284.1 L950.3 286.1 L952.2 284.1 L954.1 286.1 L956.0 284.1" fill="none" stroke="#6f8a55" stroke-width="0.900" stroke-linejoin="round"/></svg>
<div class="a" style="left:553.500px;top:815.800px;width:837.500px;height:1.200px;background:#414345"></div>
<div class="a" style="left:3.900px;top:33.300px;width:888.400px;height:51.800px;box-sizing:border-box;border:solid #f8210f;border-width:3.600px 3.400px 3.400px 4.100px;border-radius:4.500px"></div>
<svg style="left:925px;top:215px" width="160" height="40" viewBox="925 215 160 40">
<path d="M1079.300 249.700 L944.200 226 L943.800 222.500 L931 228.600 L941 237 L942.100 234.800 L1079.300 250.700 Z" fill="#f8210f"/></svg>
</body></html>
